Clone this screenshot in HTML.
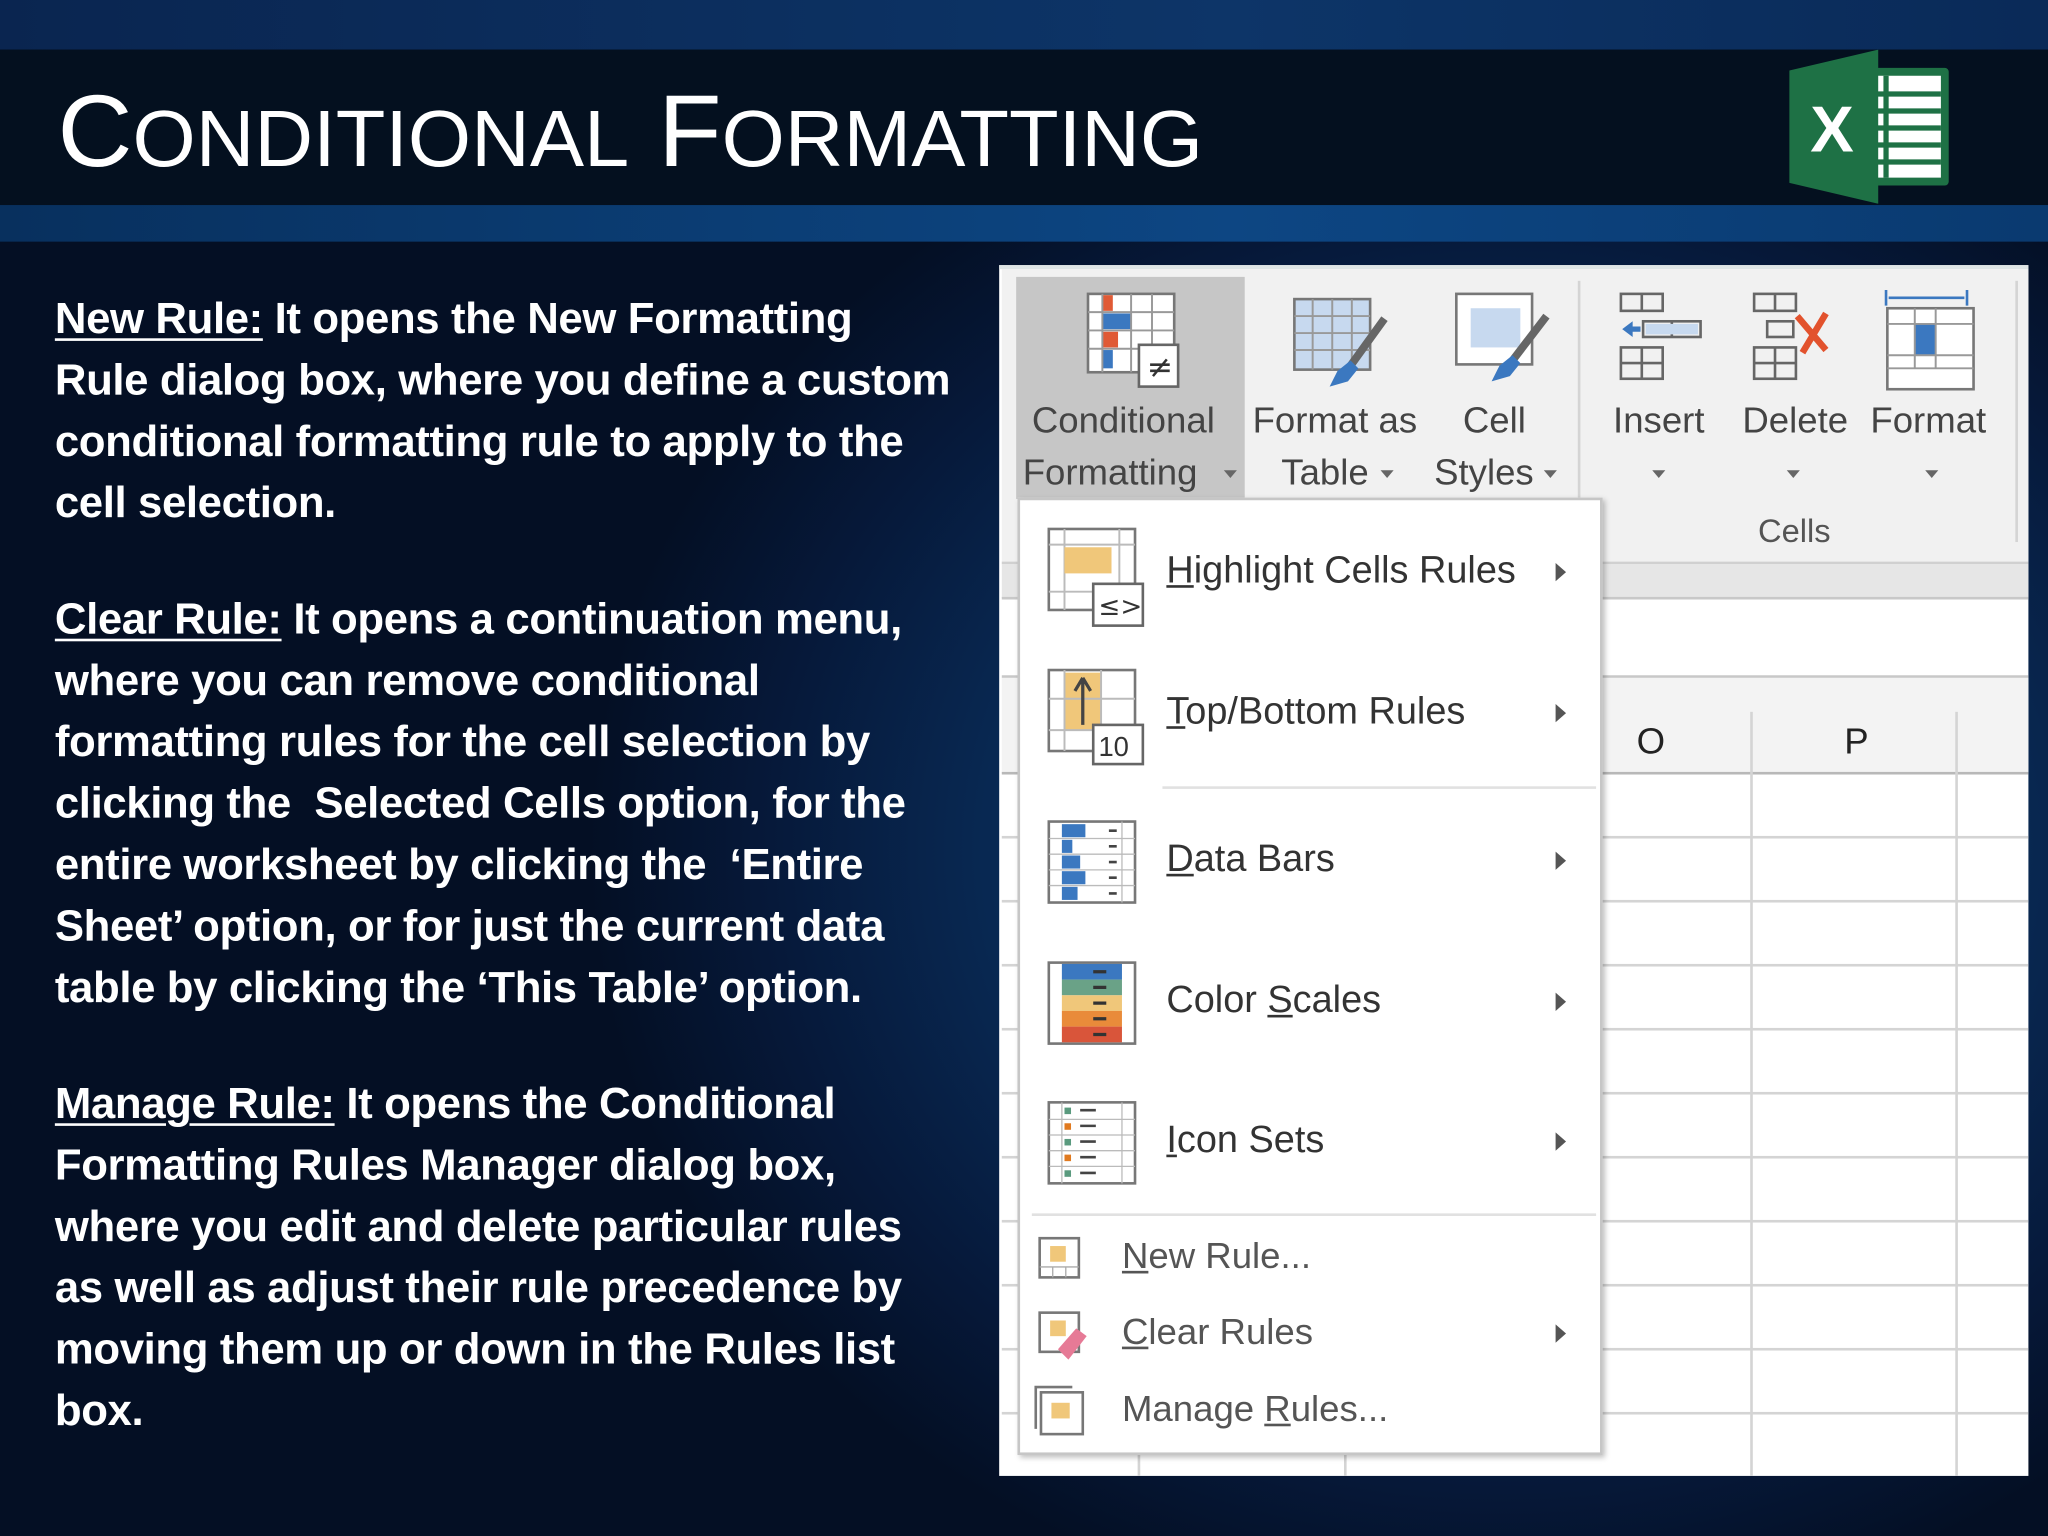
<!DOCTYPE html>
<html><head><meta charset="utf-8"><style>
*{margin:0;padding:0;box-sizing:border-box}
html,body{width:2048px;height:1536px;overflow:hidden;background:#061630}
#w{position:absolute;left:0;top:0;width:1568px;height:1176px;transform:scale(1.306122);transform-origin:0 0;
background:radial-gradient(ellipse 700px 600px at 1150px 650px,#0d4a86 0%,#0a3363 40%,#06193a 80%,#040f24 100%);font-family:"Liberation Sans",sans-serif;overflow:hidden}
.abs{position:absolute}
#top{left:0;top:0;width:1568px;height:38px;background:linear-gradient(90deg,#0a2550,#0d3568 60%,#0a2a58)}
#bar{left:0;top:38px;width:1568px;height:120px;background:#04101f}
#blue{left:0;top:157px;width:1568px;height:28px;background:linear-gradient(90deg,#08305e,#0d4683 60%,#0a3a70)}
#title{left:44px;top:60px;color:#fff;font-size:78px;line-height:80px;white-space:nowrap;transform:scaleX(1.02);transform-origin:0 0}
#title small{font-size:61px}
.txt{left:42px;color:#fff;font-size:33.5px;font-weight:bold;line-height:47px;white-space:nowrap;letter-spacing:-0.3px}
.txt u{text-decoration-thickness:2px;text-underline-offset:4px}
#shot{left:765px;top:203px;width:788px;height:927px;background:#fff;border-top:3px solid #dfe6e6;overflow:hidden}
.rib{color:#444;font-size:28px;letter-spacing:0;position:absolute;white-space:nowrap}
.mi{position:absolute;left:893px;font-size:29px;color:#333;letter-spacing:0;white-space:nowrap}
.ms{position:absolute;left:859px;font-size:28px;color:#555;letter-spacing:0;white-space:nowrap}
.arr{position:absolute;left:1191px;width:0;height:0;border-top:7px solid transparent;border-bottom:7px solid transparent;border-left:8px solid #555}
.dd{position:absolute;width:0;height:0;border-left:5px solid transparent;border-right:5px solid transparent;border-top:6px solid #666}
.hl{position:absolute;height:2px;background:#d4d4d4}
.vl{position:absolute;width:2px;background:#d4d4d4}
</style></head><body><div id="w">
<div class="abs" id="top"></div><div class="abs" id="bar"></div><div class="abs" id="blue"></div>
<div class="abs" id="title">C<small>ONDITIONAL</small> F<small>ORMATTING</small></div>
<svg class="abs" style="left:1368px;top:38px" width="126" height="118" viewBox="0 0 126 118">
<rect x="50" y="14" width="74" height="90" rx="3" fill="#1e7145"/>
<g fill="#fff"><rect x="56" y="20" width="62" height="78"/></g>
<g stroke="#1e7145" stroke-width="4"><line x1="56" y1="34" x2="118" y2="34"/><line x1="56" y1="47" x2="118" y2="47"/><line x1="56" y1="60" x2="118" y2="60"/><line x1="56" y1="73" x2="118" y2="73"/><line x1="56" y1="86" x2="118" y2="86"/><line x1="76" y1="20" x2="76" y2="98"/></g>
<polygon points="2,16 70,0 70,118 2,102" fill="#1e7145"/>
<text x="18" y="78" fill="#fff" font-family="Liberation Sans" font-size="50" font-weight="bold">X</text></svg>

<div class="abs txt" style="top:221px"><u>New Rule:</u> It opens the New Formatting<br>Rule dialog box, where you define a custom<br>conditional formatting rule to apply to the<br>cell selection.</div>
<div class="abs txt" style="top:451px"><u>Clear Rule:</u> It opens a continuation menu,<br>where you can remove conditional<br>formatting rules for the cell selection by<br>clicking the &nbsp;Selected Cells option, for the<br>entire worksheet by clicking the &nbsp;‘Entire<br>Sheet’ option, or for just the current data<br>table by clicking the ‘This Table’ option.</div>
<div class="abs txt" style="top:822px"><u>Manage Rule:</u> It opens the Conditional<br>Formatting Rules Manager dialog box,<br>where you edit and delete particular rules<br>as well as adjust their rule precedence by<br>moving them up or down in the Rules list<br>box.</div>

<div class="abs" id="shot"></div>
<div class="abs" style="left:767px;top:206px;width:786px;height:226px;background:#f1f1f1"></div>
<div class="abs" style="left:778px;top:212px;width:175px;height:170px;background:#c6c6c6"></div>
<div class="vl" style="left:1208px;top:215px;height:170px"></div>
<div class="vl" style="left:1543px;top:215px;height:200px"></div>
<div class="hl" style="left:767px;top:430px;width:786px;background:#d0d0d0"></div>
<div class="abs" style="left:767px;top:432px;width:786px;height:26px;background:#e6e6e6"></div>
<div class="hl" style="left:767px;top:457px;width:786px;background:#c8c8c8"></div>
<div class="hl" style="left:767px;top:517px;width:786px;background:#c8c8c8"></div>
<div class="abs" style="left:767px;top:519px;width:786px;height:73px;background:#f3f3f3"></div>
<div class="hl" style="left:767px;top:591px;width:786px;background:#b8b8b8"></div>
<div class="vl" style="left:1340px;top:545px;height:585px"></div>
<div class="vl" style="left:1497px;top:545px;height:585px"></div>
<div class="vl" style="left:871px;top:1110px;height:20px"></div>
<div class="vl" style="left:1029px;top:1110px;height:20px"></div>
<div class="hl" style="left:767px;top:640px;width:786px"></div>
<div class="hl" style="left:767px;top:689px;width:786px"></div>
<div class="hl" style="left:767px;top:738px;width:786px"></div>
<div class="hl" style="left:767px;top:787px;width:786px"></div>
<div class="hl" style="left:767px;top:836px;width:786px"></div>
<div class="hl" style="left:767px;top:885px;width:786px"></div>
<div class="hl" style="left:767px;top:934px;width:786px"></div>
<div class="hl" style="left:767px;top:983px;width:786px"></div>
<div class="hl" style="left:767px;top:1032px;width:786px"></div>
<div class="hl" style="left:767px;top:1081px;width:786px"></div>
<div class="rib" style="left:1253px;top:552px;color:#222">O</div>
<div class="rib" style="left:1412px;top:552px;color:#222">P</div>

<div class="rib" style="left:790px;top:306px">Conditional</div>
<div class="rib" style="left:783px;top:346px">Formatting</div><div class="dd" style="left:937px;top:360px"></div>
<div class="rib" style="left:959px;top:306px">Format as</div>
<div class="rib" style="left:981px;top:346px">Table</div><div class="dd" style="left:1057px;top:360px"></div>
<div class="rib" style="left:1120px;top:306px">Cell</div>
<div class="rib" style="left:1098px;top:346px">Styles</div><div class="dd" style="left:1182px;top:360px"></div>
<div class="rib" style="left:1235px;top:306px">Insert</div><div class="dd" style="left:1265px;top:360px"></div>
<div class="rib" style="left:1334px;top:306px">Delete</div><div class="dd" style="left:1368px;top:360px"></div>
<div class="rib" style="left:1432px;top:306px">Format</div><div class="dd" style="left:1474px;top:360px"></div>
<div class="rib" style="left:1346px;top:393px;font-size:25px;color:#555">Cells</div>

<svg class="abs" style="left:830px;top:222px" width="76" height="76" viewBox="0 0 76 76">
<rect x="3" y="3" width="66" height="60" fill="#fff" stroke="#777" stroke-width="2"/>
<rect x="14" y="4" width="8" height="12" fill="#e05a35"/><rect x="14" y="18" width="22" height="12" fill="#3b78c0"/><rect x="14" y="32" width="12" height="12" fill="#e05a35"/><rect x="14" y="46" width="8" height="14" fill="#3b78c0"/>
<g stroke="#999" stroke-width="1.5"><line x1="14" y1="3" x2="14" y2="63"/><line x1="36" y1="3" x2="36" y2="63"/><line x1="52" y1="3" x2="52" y2="63"/><line x1="3" y1="17" x2="69" y2="17"/><line x1="3" y1="31" x2="69" y2="31"/><line x1="3" y1="45" x2="69" y2="45"/></g>
<rect x="42" y="42" width="30" height="32" fill="#fff" stroke="#666" stroke-width="2"/>
<text x="48" y="67" font-size="24" fill="#333" font-family="DejaVu Sans">≠</text></svg>
<svg class="abs" style="left:988px;top:226px" width="76" height="72" viewBox="0 0 76 72">
<rect x="3" y="3" width="58" height="54" fill="#c7d9ef" stroke="#777" stroke-width="2"/>
<g stroke="#999" stroke-width="1.5"><line x1="3" y1="16" x2="61" y2="16"/><line x1="3" y1="29" x2="61" y2="29"/><line x1="3" y1="42" x2="61" y2="42"/><line x1="17" y1="3" x2="17" y2="57"/><line x1="32" y1="3" x2="32" y2="57"/><line x1="47" y1="3" x2="47" y2="57"/></g>
<line x1="72" y1="18" x2="46" y2="54" stroke="#666" stroke-width="6"/><path d="M46 50 L36 58 L30 70 L44 66 L52 56Z" fill="#3b78c0"/></svg>
<svg class="abs" style="left:1112px;top:222px" width="76" height="74" viewBox="0 0 76 74">
<rect x="3" y="3" width="58" height="54" fill="#fff" stroke="#777" stroke-width="2"/><rect x="14" y="14" width="38" height="30" fill="#c7d9ef"/>
<line x1="72" y1="20" x2="46" y2="54" stroke="#666" stroke-width="6"/><path d="M46 50 L36 58 L30 70 L44 66 L52 56Z" fill="#3b78c0"/></svg>
<svg class="abs" style="left:1238px;top:222px" width="70" height="70" viewBox="0 0 70 70">
<g fill="none" stroke="#666" stroke-width="2"><rect x="3" y="3" width="32" height="13"/><line x1="19" y1="3" x2="19" y2="16"/><rect x="20" y="24" width="44" height="12"/><line x1="42" y1="24" x2="42" y2="36"/><rect x="3" y="44" width="32" height="24"/><line x1="19" y1="44" x2="19" y2="68"/><line x1="3" y1="56" x2="35" y2="56"/></g>
<rect x="22" y="26" width="40" height="8" fill="#c7d9ef"/><path d="M4 30 L12 24 L12 36Z M10 28 h8 v4 h-8z" fill="#3b78c0"/></svg>
<svg class="abs" style="left:1340px;top:222px" width="76" height="72" viewBox="0 0 76 72">
<g fill="none" stroke="#666" stroke-width="2"><rect x="3" y="3" width="32" height="13"/><line x1="19" y1="3" x2="19" y2="16"/><rect x="13" y="24" width="20" height="12"/><rect x="3" y="44" width="32" height="24"/><line x1="19" y1="44" x2="19" y2="68"/><line x1="3" y1="56" x2="35" y2="56"/></g>
<g stroke="#e2522d" stroke-width="5"><line x1="36" y1="20" x2="58" y2="46"/><line x1="58" y1="18" x2="40" y2="48"/></g></svg>
<svg class="abs" style="left:1440px;top:220px" width="76" height="80" viewBox="0 0 76 80">
<g stroke="#3b78c0" stroke-width="2" fill="none"><line x1="4" y1="2" x2="4" y2="14"/><line x1="66" y1="2" x2="66" y2="14"/><line x1="6" y1="8" x2="64" y2="8"/></g>
<rect x="5" y="16" width="66" height="62" fill="#fff" stroke="#777" stroke-width="2"/>
<rect x="26" y="28" width="16" height="24" fill="#3b78c0"/>
<g stroke="#999" stroke-width="1.5"><line x1="26" y1="16" x2="26" y2="62"/><line x1="42" y1="16" x2="42" y2="62"/><line x1="5" y1="28" x2="71" y2="28"/><line x1="5" y1="52" x2="71" y2="52"/><line x1="5" y1="62" x2="71" y2="62"/></g></svg>

<div class="abs" style="left:779px;top:381px;width:448px;height:733px;background:#fff;border:2px solid #c6c6c6;box-shadow:2px 2px 4px rgba(0,0,0,.25)"></div>
<div class="hl" style="left:890px;top:602px;width:332px;background:#e1e1e1"></div>
<div class="hl" style="left:790px;top:929px;width:432px;background:#e1e1e1"></div>

<svg class="abs" style="left:801px;top:403px" width="76" height="78" viewBox="0 0 76 78">
<rect x="2" y="2" width="66" height="62" fill="#fff" stroke="#777" stroke-width="2"/>
<g stroke="#bbb" stroke-width="1.5"><line x1="14" y1="2" x2="14" y2="64"/><line x1="56" y1="2" x2="56" y2="64"/><line x1="2" y1="14" x2="68" y2="14"/><line x1="2" y1="50" x2="68" y2="50"/></g>
<rect x="14" y="16" width="36" height="20" fill="#f0c77a"/>
<rect x="36" y="44" width="38" height="32" fill="#fff" stroke="#666" stroke-width="2"/><text x="40" y="68" font-size="20" fill="#333" font-family="DejaVu Sans">≤&gt;</text></svg>
<svg class="abs" style="left:801px;top:511px" width="76" height="76" viewBox="0 0 76 76">
<rect x="2" y="2" width="66" height="62" fill="#fff" stroke="#777" stroke-width="2"/><rect x="14" y="4" width="28" height="44" fill="#f0c77a"/>
<g stroke="#bbb" stroke-width="1.5"><line x1="14" y1="2" x2="14" y2="64"/><line x1="42" y1="2" x2="42" y2="64"/><line x1="2" y1="24" x2="68" y2="24"/><line x1="2" y1="48" x2="68" y2="48"/></g>
<path d="M28 8 L22 18 M28 8 L34 18 M28 8 V44" stroke="#444" stroke-width="2.5" fill="none"/>
<rect x="36" y="44" width="38" height="30" fill="#fff" stroke="#666" stroke-width="2"/><text x="40" y="68" font-size="21" fill="#333">10</text></svg>
<svg class="abs" style="left:801px;top:627px" width="70" height="66" viewBox="0 0 70 66">
<rect x="2" y="2" width="66" height="62" fill="#fff" stroke="#777" stroke-width="2"/>
<g fill="#3b78c0"><rect x="12" y="4" width="18" height="10"/><rect x="12" y="16" width="8" height="10"/><rect x="12" y="28" width="14" height="10"/><rect x="12" y="40" width="18" height="10"/><rect x="12" y="52" width="12" height="10"/></g>
<g stroke="#444" stroke-width="2"><line x1="48" y1="9" x2="54" y2="9"/><line x1="48" y1="21" x2="54" y2="21"/><line x1="48" y1="33" x2="54" y2="33"/><line x1="48" y1="45" x2="54" y2="45"/><line x1="48" y1="57" x2="54" y2="57"/></g>
<g stroke="#bbb" stroke-width="1"><line x1="2" y1="15" x2="68" y2="15"/><line x1="2" y1="27" x2="68" y2="27"/><line x1="2" y1="39" x2="68" y2="39"/><line x1="2" y1="51" x2="68" y2="51"/><line x1="58" y1="2" x2="58" y2="64"/></g></svg>
<svg class="abs" style="left:801px;top:735px" width="70" height="66" viewBox="0 0 70 66">
<rect x="2" y="2" width="66" height="62" fill="#fff" stroke="#777" stroke-width="2"/>
<rect x="12" y="3" width="46" height="12" fill="#3b78c0"/><rect x="12" y="15" width="46" height="12" fill="#6aa287"/><rect x="12" y="27" width="46" height="12" fill="#f0c77a"/><rect x="12" y="39" width="46" height="12" fill="#e98b3a"/><rect x="12" y="51" width="46" height="12" fill="#d9553a"/>
<g stroke="#333" stroke-width="2.5"><line x1="36" y1="9" x2="46" y2="9"/><line x1="36" y1="21" x2="46" y2="21"/><line x1="36" y1="33" x2="46" y2="33"/><line x1="36" y1="45" x2="46" y2="45"/><line x1="36" y1="57" x2="46" y2="57"/></g></svg>
<svg class="abs" style="left:801px;top:842px" width="70" height="66" viewBox="0 0 70 66">
<rect x="2" y="2" width="66" height="62" fill="#fff" stroke="#777" stroke-width="2"/>
<g stroke="#bbb" stroke-width="1"><line x1="2" y1="15" x2="68" y2="15"/><line x1="2" y1="27" x2="68" y2="27"/><line x1="2" y1="39" x2="68" y2="39"/><line x1="2" y1="51" x2="68" y2="51"/><line x1="12" y1="2" x2="12" y2="64"/><line x1="58" y1="2" x2="58" y2="64"/></g>
<g><rect x="14" y="6" width="5" height="5" fill="#5a9a7e"/><rect x="14" y="18" width="5" height="5" fill="#e07a20"/><rect x="14" y="30" width="5" height="5" fill="#5a9a7e"/><rect x="14" y="42" width="5" height="5" fill="#e07a20"/><rect x="14" y="54" width="5" height="5" fill="#5a9a7e"/></g>
<g stroke="#444" stroke-width="2"><line x1="26" y1="8" x2="38" y2="8"/><line x1="26" y1="20" x2="38" y2="20"/><line x1="26" y1="32" x2="38" y2="32"/><line x1="26" y1="44" x2="38" y2="44"/><line x1="26" y1="56" x2="38" y2="56"/></g></svg>
<svg class="abs" style="left:794px;top:946px" width="36" height="36" viewBox="0 0 36 36"><rect x="2" y="2" width="30" height="30" fill="#fff" stroke="#777" stroke-width="2"/><rect x="10" y="8" width="12" height="12" fill="#f0c77a"/><g stroke="#aaa"><line x1="2" y1="24" x2="32" y2="24"/><line x1="12" y1="24" x2="12" y2="32"/><line x1="22" y1="24" x2="22" y2="32"/></g></svg>
<svg class="abs" style="left:794px;top:1003px" width="40" height="40" viewBox="0 0 40 40"><rect x="2" y="2" width="30" height="30" fill="#fff" stroke="#777" stroke-width="2"/><rect x="10" y="8" width="12" height="12" fill="#f0c77a"/><path d="M16 30 L30 14 L38 20 L24 38Z" fill="#e67a96"/></svg>
<svg class="abs" style="left:791px;top:1060px" width="40" height="40" viewBox="0 0 40 40"><path d="M2 34 V2 H30" stroke="#777" stroke-width="2" fill="none"/><rect x="6" y="6" width="32" height="32" fill="#fff" stroke="#777" stroke-width="2"/><rect x="14" y="14" width="14" height="12" fill="#f0c77a"/></svg>

<div class="mi" style="top:421px"><u>H</u>ighlight Cells Rules</div><div class="arr" style="top:431px"></div>
<div class="mi" style="top:529px"><u>T</u>op/Bottom Rules</div><div class="arr" style="top:539px"></div>
<div class="mi" style="top:642px"><u>D</u>ata Bars</div><div class="arr" style="top:652px"></div>
<div class="mi" style="top:750px">Color <u>S</u>cales</div><div class="arr" style="top:760px"></div>
<div class="mi" style="top:857px"><u>I</u>con Sets</div><div class="arr" style="top:867px"></div>
<div class="ms" style="top:946px"><u>N</u>ew Rule...</div>
<div class="ms" style="top:1004px"><u>C</u>lear Rules</div><div class="arr" style="top:1014px"></div>
<div class="ms" style="top:1063px">Manage <u>R</u>ules...</div>
</div></body></html>
